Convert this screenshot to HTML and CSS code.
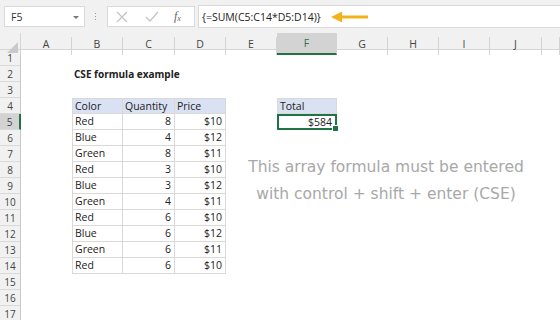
FILE: index.html
```html
<!DOCTYPE html>
<html lang="en">
<head>
    <meta charset="UTF-8">
    <title>CSE formula example</title>
    <link rel="stylesheet" href="styles.css">
</head>
<body>
    <div class="toolbar">
        <div class="name-box">F5 <span class="caret"></span></div>
        <div class="grip"><span></span><span></span><span></span></div>
        <div class="buttons">
            <svg width="12" height="12" viewBox="0 0 12 12"><path d="M1 1 L11 11 M11 1 L1 11" stroke="#c4c4c4" stroke-width="1.3" fill="none"/></svg>
            <svg width="14" height="12" viewBox="0 0 14 12"><path d="M1 6 L5 10 L13 1" stroke="#c4c4c4" stroke-width="1.3" fill="none"/></svg>
            <span class="fx"><i>f</i><sub>x</sub></span>
        </div>
        <div class="formula">
            <span>{=SUM(C5:C14*D5:D14)}</span>
            <svg class="arrow" width="38" height="12" viewBox="0 0 38 12"><path d="M9 6 H37" stroke="#f3b21b" stroke-width="3"/><path d="M0 6 L11 0.5 L11 11.5 Z" fill="#f3b21b"/></svg>
        </div>
    </div>

    <div class="sheet">
        <div class="row head">
            <div class="corner"><span></span></div>
            <div class="col">A</div><div class="col">B</div><div class="col">C</div><div class="col">D</div><div class="col">E</div>
            <div class="col active">F</div><div class="col">G</div><div class="col">H</div><div class="col">I</div><div class="col">J</div><div class="col"></div>
        </div>
        <div class="row"><div class="num">1</div></div>
        <div class="row"><div class="num">2</div><div></div><div class="title">CSE formula example</div></div>
        <div class="row"><div class="num">3</div></div>
        <div class="row"><div class="num">4</div><div></div>
            <div class="cell th first top">Color</div><div class="cell th top">Quantity</div><div class="cell th top">Price</div><div></div>
            <div class="cell th first top">Total</div>
        </div>
        <div class="row"><div class="num active">5</div><div></div>
            <div class="cell first">Red</div><div class="cell r">8</div><div class="cell r">$10</div><div></div>
            <div class="cell r selected">$584<span class="handle"></span></div>
        </div>
        <div class="row"><div class="num">6</div><div></div><div class="cell first">Blue</div><div class="cell r">4</div><div class="cell r">$12</div></div>
        <div class="row"><div class="num">7</div><div></div><div class="cell first">Green</div><div class="cell r">8</div><div class="cell r">$11</div></div>
        <div class="row"><div class="num">8</div><div></div><div class="cell first">Red</div><div class="cell r">3</div><div class="cell r">$10</div></div>
        <div class="row"><div class="num">9</div><div></div><div class="cell first">Blue</div><div class="cell r">3</div><div class="cell r">$12</div></div>
        <div class="row"><div class="num">10</div><div></div><div class="cell first">Green</div><div class="cell r">4</div><div class="cell r">$11</div></div>
        <div class="row"><div class="num">11</div><div></div><div class="cell first">Red</div><div class="cell r">6</div><div class="cell r">$10</div></div>
        <div class="row"><div class="num">12</div><div></div><div class="cell first">Blue</div><div class="cell r">6</div><div class="cell r">$12</div></div>
        <div class="row"><div class="num">13</div><div></div><div class="cell first">Green</div><div class="cell r">6</div><div class="cell r">$11</div></div>
        <div class="row"><div class="num">14</div><div></div><div class="cell first">Red</div><div class="cell r">6</div><div class="cell r">$10</div></div>
        <div class="row"><div class="num">15</div></div>
        <div class="row"><div class="num">16</div></div>
        <div class="row"><div class="num">17</div></div>

        <div class="note">This array formula must be entered<br>with control + shift + enter (CSE)</div>
    </div>
</body>
</html>
```

FILE: styles.css
```css
body {
    margin: 0;
    width: 560px;
    height: 320px;
    overflow: hidden;
    font-family: 'Segoe UI', 'Open Sans', sans-serif;
    font-size: 10.5px;
    color: #222;
    background-color: #fff;
}
.toolbar {
    display: flex;
    align-items: center;
    height: 33px;
    padding: 0 0 0 4px;
    background-color: #f1f1f1;
    box-sizing: border-box;
}
.name-box {
    position: relative;
    width: 81px;
    height: 21px;
    line-height: 21px;
    padding-left: 6px;
    box-sizing: border-box;
    background-color: #fff;
    border: 1px solid #dadada;
    color: #333;
}
.caret {
    position: absolute;
    right: 5px;
    top: 9px;
    border-left: 3px solid transparent;
    border-right: 3px solid transparent;
    border-top: 3px solid #777;
}
.grip {
    display: flex;
    flex-direction: column;
    gap: 2px;
    margin: 0 11px 0 10px;
}
.grip span {
    width: 1px;
    height: 1px;
    background-color: #999;
}
.buttons {
    display: flex;
    align-items: center;
    gap: 17px;
    width: 88px;
    height: 21px;
    padding-left: 8px;
    box-sizing: border-box;
    background-color: #fff;
    border: 1px solid #dadada;
}
.fx {
    font-family: 'Liberation Serif', serif;
    font-size: 12px;
    color: #666;
    margin-left: -2px;
}
.fx sub {
    font-size: 8px;
    font-style: italic;
    vertical-align: -1px;
}
.formula {
    flex: 1;
    display: flex;
    align-items: center;
    gap: 10px;
    height: 21px;
    margin-left: 3px;
    padding-left: 3px;
    background-color: #fff;
    border: 1px solid #dadada;
    border-right: none;
    color: #222;
}
.sheet {
    position: relative;
}
.row {
    display: grid;
    grid-template-columns: 21px 51px 51px 52px 51px 51px 60px 51px 51px 51px 52px 1fr;
    height: 16px;
}
.head {
    height: 17px;
    background-color: #f1f1f1;
    border-bottom: 1px solid #d4d4d4;
    box-sizing: border-box;
}
.corner {
    position: relative;
    border-right: 1px solid #d4d4d4;
}
.corner span {
    position: absolute;
    right: 2px;
    bottom: 2px;
    border-left: 11px solid transparent;
    border-bottom: 11px solid #c9c9c9;
}
.col {
    display: flex;
    align-items: center;
    justify-content: center;
    color: #444;
    border-right: 1px solid #d4d4d4;
    margin-top: 4px;
    padding-bottom: 4px;
}
.col.active {
    margin-top: 0;
    padding-bottom: 0;
    background-color: #d3d3d3;
    border-bottom: 2px solid #217346;
    color: #3d6b4f;
}
.num {
    display: flex;
    align-items: center;
    justify-content: center;
    background-color: #f1f1f1;
    color: #444;
    border-right: 1px solid #c8c8c8;
    border-bottom: 1px solid #d9d9d9;
    box-sizing: border-box;
    font-size: 10px;
}
.num.active {
    background-color: #d3d3d3;
    border-right: 2px solid #217346;
}
.title {
    font-weight: bold;
    white-space: nowrap;
    line-height: 16px;
    padding-left: 2px;
    font-size: 10px;
}
.cell {
    line-height: 15px;
    padding: 0 3px 0 2px;
    border-right: 1px solid #d9d9d9;
    border-bottom: 1px solid #d9d9d9;
    box-sizing: border-box;
    white-space: nowrap;
}
.cell.first {
    border-left: 1px solid #d9d9d9;
}
.cell.top {
    border-top: 1px solid #d9d9d9;
    line-height: 14px;
}
.th {
    background-color: #d9e1f2;
}
.r {
    text-align: right;
}
.selected {
    position: relative;
    border: 2px solid #217346;
    line-height: 12px;
}
.handle {
    position: absolute;
    right: -4px;
    bottom: -4px;
    width: 5px;
    height: 5px;
    background-color: #217346;
    border: 1px solid #fff;
}
.note {
    position: absolute;
    left: 236px;
    top: 121px;
    width: 300px;
    text-align: center;
    font-family: 'DejaVu Sans', sans-serif;
    font-size: 15.5px;
    line-height: 27px;
    color: #a8a8a8;
}
```
